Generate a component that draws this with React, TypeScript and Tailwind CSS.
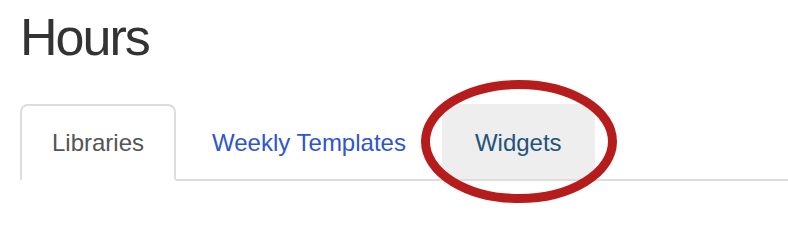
export default function App() {
  const font = { fontFamily: '"Liberation Sans", Arial, Helvetica, sans-serif' };
  return (
    <div className="relative h-[248px] w-[788px] overflow-hidden bg-white pl-[20px] pt-[9px]" style={font}>
      <h1 className="m-0 text-[52px] leading-[1.1] font-normal tracking-[-2px] text-[#333]">Hours</h1>
      <ul className="mt-[38px] flex gap-[3px] border-b-2 border-[#ddd]">
        <li className="-mb-[2px]">
          <a className="block rounded-t-[8px] border-2 border-[#ddd] border-b-transparent bg-white px-[30px] pt-[19px] pb-[19px] text-[24px] leading-[35px] text-[#555]">
            Libraries
          </a>
        </li>
        <li className="-mb-[2px]">
          <a className="block border-2 border-transparent px-[31px] pt-[19px] pb-[19px] text-[24px] leading-[35px] text-[#2f55d0]">
            Weekly Templates
          </a>
        </li>
        <li className="-mb-[2px]">
          <a className="block border-2 border-[#eee] border-b-[#ddd] bg-[#eee] px-[31px] pt-[19px] pb-[19px] text-[24px] leading-[35px] text-[#23527c]">
            Widgets
          </a>
        </li>
      </ul>
      <svg className="pointer-events-none absolute left-0 top-0" width="788" height="248" viewBox="0 0 788 248">
        <ellipse cx="519" cy="141.5" rx="93.5" ry="57" fill="none" stroke="#b71c1c" strokeWidth="9" />
      </svg>
    </div>
  );
}
